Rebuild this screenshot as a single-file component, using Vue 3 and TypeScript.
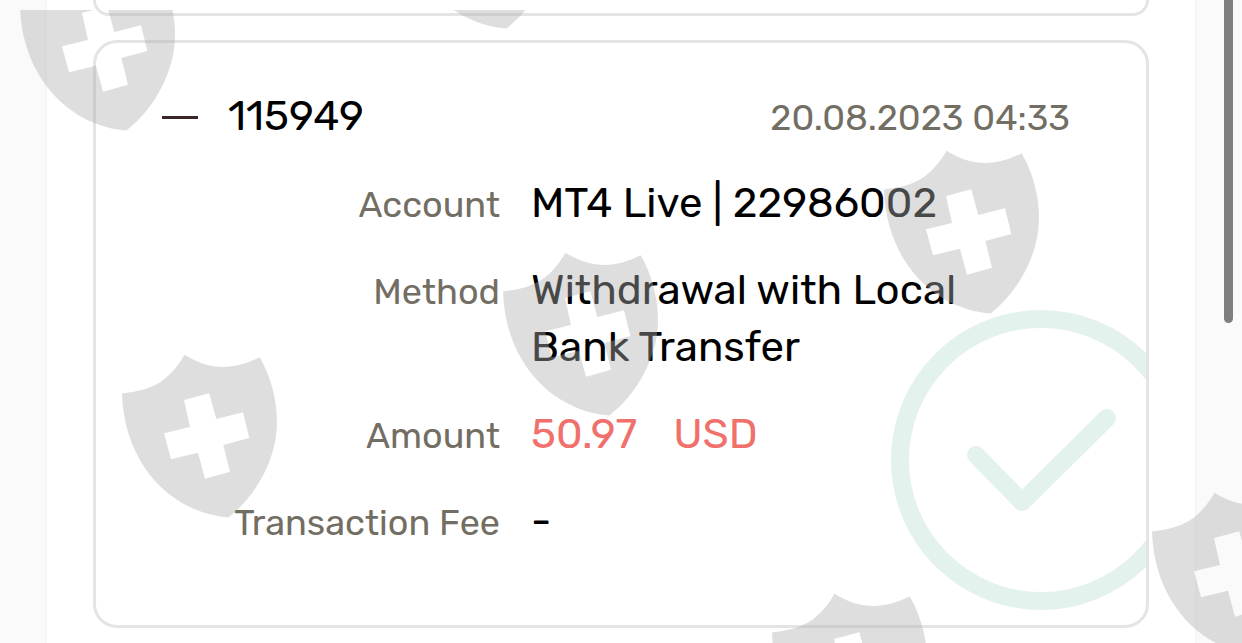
<script setup lang="ts">
interface Detail {
  label: string
  value: string
  unit?: string
}

const transactionId = '115949'
const timestamp = '20.08.2023 04:33'

const details: Detail[] = [
  { label: 'Account', value: 'MT4 Live | 22986002' },
  { label: 'Method', value: 'Withdrawal with Local Bank Transfer' },
  { label: 'Amount', value: '50.97', unit: 'USD' },
  { label: 'Transaction Fee', value: '-' },
]

// Watermark positions on the overlay canvas
const shields = [
  { x: 19, y: -33 },
  { x: 399, y: -135 },
  { x: 883, y: 150 },
  { x: 502, y: 252 },
  { x: 121, y: 354 },
  { x: 771, y: 593 },
  { x: 1151, y: 492 },
]
</script>

<template>
  <div class="page">
    <main class="panel">
      <article class="card previous" aria-hidden="true"></article>
      <article class="card">
        <header class="head">
          <button class="collapse" type="button" aria-label="Collapse"></button>
          <span class="id">{{ transactionId }}</span>
          <time class="date">{{ timestamp }}</time>
        </header>
        <dl class="details">
          <template v-for="item in details" :key="item.label">
            <dt>{{ item.label }}</dt>
            <dd :class="{ debit: item.unit }">
              <span>{{ item.value }}</span>
              <span v-if="item.unit">{{ item.unit }}</span>
            </dd>
          </template>
        </dl>
        <svg class="status" viewBox="0 0 300 300" aria-hidden="true">
          <circle cx="150" cy="150" r="141" />
          <path d="M85 145 L131 192 L216 108" />
        </svg>
      </article>
    </main>

    <svg class="watermark" aria-hidden="true">
      <defs>
        <clipPath id="mark-area"><rect x="0" y="10" width="100%" height="100%" /></clipPath>
        <path
          id="shield"
          fill-rule="evenodd"
          d="M1 39.5 C30 36 47 29 63.5 0.7 C88 16 112 17 138.7 3.3 C150 23 156 46 156 68 C156 104 136 141 107.5 163.5 C50 159 3 110 1 39.5 Z
             M63 46 L88.3 39.3 L95.3 65 L122 58.3 L128.3 84 L102.3 91 L109 117.7 L84 124.7 L77 98.7 L50 105.3 L43 79.3 L69 73 Z"
        />
      </defs>
      <g clip-path="url(#mark-area)">
        <use v-for="(s, i) in shields" :key="i" href="#shield" :x="s.x" :y="s.y" />
      </g>
    </svg>
    <div class="scroll-thumb" aria-hidden="true"></div>
  </div>
</template>

<style>
body {
  margin: 0;
  overflow: hidden;
}
</style>

<style scoped>
.page {
  position: relative;
  overflow: hidden;
  height: 100vh;
  box-sizing: border-box;
  padding: 0 47px;
  background: #fafafa;
  font-family: Rubik, Inter, "Liberation Sans", sans-serif;
  color: #000;
}

.panel {
  display: flex;
  flex-direction: column;
  gap: 24px;
  box-sizing: border-box;
  min-height: 100vh;
  padding: 0 46px;
  background: #fff;
  box-shadow: 0 0 3px #ececec;
}

.card {
  position: relative;
  z-index: 0;
  overflow: hidden;
  box-sizing: border-box;
  padding: 45px 76px 75px 66px;
  border: 3px solid #e4e4e4;
  border-radius: 24px;
}

.previous {
  flex: none;
  height: 16px;
  padding: 0;
  border-top: 0;
  border-radius: 0 0 24px 24px;
}

.head {
  display: flex;
  align-items: baseline;
  margin-bottom: 30px;
  line-height: 57px;
}

.collapse {
  align-self: center;
  width: 36px;
  height: 35px;
  margin: 2px 30px 0 0;
  padding: 0;
  border: 0;
  background: linear-gradient(#3a2626, #3a2626) center / 36px 3px no-repeat;
}

.id {
  font-size: 42px;
}

.date {
  margin-left: auto;
  font-size: 36px;
  line-height: 48px;
  color: #736e63;
}

.details {
  display: grid;
  grid-template-columns: 338px minmax(0, 500px);
  align-items: baseline;
  gap: 30px 31px;
  margin: 0;
  line-height: 57px;
}

dt {
  font-size: 36px;
  line-height: 48px;
  text-align: right;
  color: #736e63;
}

dd {
  display: flex;
  gap: 36px;
  margin: 0;
  font-size: 42px;
}

.debit {
  color: #f0706c;
}

.status {
  position: absolute;
  z-index: -1;
  right: -45px;
  bottom: 15px;
  width: 300px;
  height: 300px;
  fill: none;
  stroke: #e4f2ed;
  stroke-width: 18px;
  stroke-linecap: round;
  stroke-linejoin: round;
}

.watermark {
  position: absolute;
  z-index: 1;
  inset: 0;
  width: 100%;
  height: 100%;
  fill: #b0b0b0;
  fill-opacity: 0.41;
  pointer-events: none;
}

.scroll-thumb {
  position: absolute;
  z-index: 2;
  top: 0;
  right: 9px;
  width: 9px;
  height: 323px;
  border-radius: 0 0 5px 5px;
  background: #7f7f7f;
}
</style>
